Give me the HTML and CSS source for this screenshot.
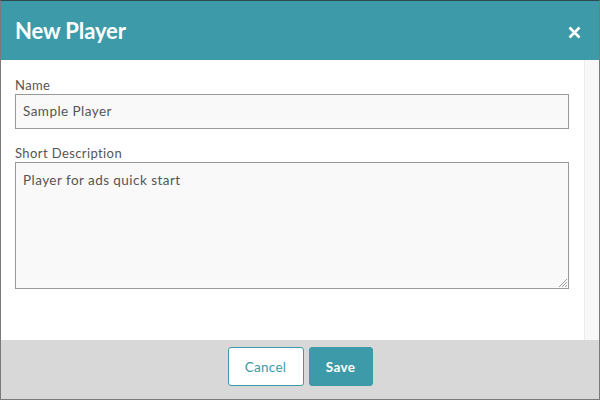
FILE: index.html
```html
<!DOCTYPE html>
<html>
<head>
<meta charset="utf-8">
<link rel="stylesheet" href="styles.css">
</head>
<body>
<div class="dialog">
  <header class="header">
    <h1 class="title">New Player</h1>
    <button class="close" aria-label="Close">
      <svg width="13" height="13" viewBox="0 0 13 13"><path d="M1.5 1.5 L11.5 11.5 M11.5 1.5 L1.5 11.5" stroke="#fff" stroke-width="2.6" stroke-linecap="butt"/></svg>
    </button>
  </header>
  <div class="body">
    <div class="content">
      <label class="label">Name</label>
      <div class="input">Sample Player</div>
      <label class="label label-2">Short Description</label>
      <div class="textarea">Player for ads quick start
        <svg class="grip" width="10" height="10" viewBox="0 0 10 10"><path d="M9 1 L1 9 M9 4 L4 9 M9 7 L7 9" stroke="#999" stroke-width="1"/></svg>
      </div>
    </div>
    <div class="scrollbar"></div>
  </div>
  <footer class="footer">
    <button class="btn btn-cancel">Cancel</button>
    <button class="btn btn-save">Save</button>
  </footer>
</div>
</body>
</html>
```

FILE: styles.css
```css
* { box-sizing: border-box; }
html, body { margin: 0; padding: 0; }
body { font-family: "Lato", "Open Sans", sans-serif; }
.dialog {
  width: 600px;
  height: 400px;
  border: 1px solid #7a7a7a;
  border-top-color: #2c4a50;
  display: flex;
  flex-direction: column;
  background: #fff;
}
.header {
  height: 59px;
  flex: none;
  background: #3d9ba9;
  display: flex;
  align-items: center;
  justify-content: space-between;
  padding: 0 18px 0 14px;
}
.title {
  margin: 0;
  color: #fff;
  font-size: 22px;
  font-weight: 700;
  letter-spacing: -0.1px;
}
.close {
  background: none;
  border: 0;
  padding: 0;
  width: 14px;
  height: 14px;
  display: flex;
  align-items: center;
  justify-content: center;
  margin-top: 4px;
}
.body {
  flex: 1;
  display: flex;
}
.content {
  flex: 1;
  padding: 17px 15px 0 14px;
  display: flex;
  flex-direction: column;
}
.scrollbar {
  width: 15px;
  flex: none;
  background: #f8f8f8;
  border-left: 1px solid #ececec;
}
.label {
  font-size: 13px;
  color: #555;
  line-height: 16px;
  height: 17px;
  letter-spacing: 0.4px;
}
.label-2 { margin-top: 16px; }
.input, .textarea {
  border: 1px solid #999;
  background: #f9f9f9;
  color: #555;
  font-size: 13.5px;
  letter-spacing: 0.45px;
  padding: 0 7px;
}
.input {
  height: 35px;
  line-height: 33px;
}
.textarea {
  height: 127px;
  padding-top: 8px;
  line-height: 18px;
  position: relative;
}
.grip {
  position: absolute;
  right: 0;
  bottom: 0;
}
.footer {
  height: 59px;
  flex: none;
  background: #d8d8d8;
  display: flex;
  justify-content: center;
  align-items: flex-start;
  gap: 5px;
  padding-top: 7px;
}
.btn {
  font-family: inherit;
  font-size: 13.5px;
  letter-spacing: 0.3px;
  height: 39px;
  border-radius: 3px;
  padding: 0;
}
.btn-cancel {
  width: 76px;
  background: #fff;
  color: #3d9ba9;
  border: 1px solid #3d9ba9;
  font-weight: 400;
}
.btn-save {
  width: 64px;
  background: #3d9ba9;
  color: #fff;
  border: 1px solid #3d9ba9;
  font-weight: 700;
}
```
